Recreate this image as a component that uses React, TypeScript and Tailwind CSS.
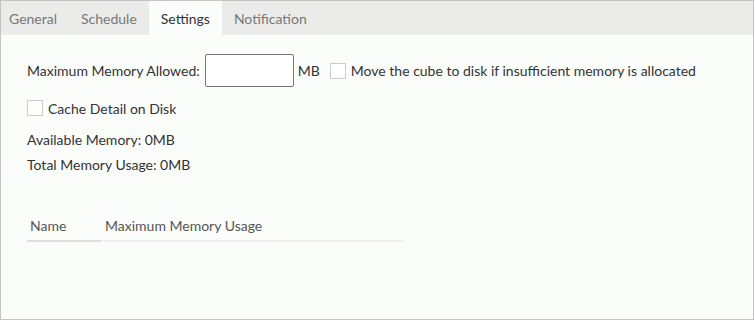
import React from 'react';

const tabs = ['General', 'Schedule', 'Settings', 'Notification'];

const Checkbox: React.FC = () => (
  <span className="inline-block w-[16px] h-[16px] border border-[#cccccc] bg-white shrink-0" />
);

export default function App() {
  return (
    <div
      className="w-[755px] h-[321px] bg-white text-[14px] text-[#333333]"
      style={{ fontFamily: 'Lato, "Noto Sans", sans-serif' }}
    >
      <div className="w-[754px] h-[320px] border border-[#c4c4c4] bg-[#fbfdfb] flex flex-col">
        {/* tab bar */}
        <div className="h-[34px] bg-[#ebecea] flex items-stretch">
          {tabs.map((t, i) => (
            <div
              key={t}
              className={`flex items-center pr-[12px] ${i === 0 ? 'pl-[8px]' : 'pl-[12px]'} ${
                t === 'Settings' ? 'bg-[#fbfdfb] text-[#333333]' : 'text-[#777777]'
              }`}
            >
              {t}
            </div>
          ))}
        </div>

        <div className="pl-[26px] pt-[19px]">
          <div className="flex items-center h-[33px]">
            <span>Maximum Memory Allowed:</span>
            <input className="ml-[5px] w-[89px] h-[33px] border border-[#777777] rounded-[2px] bg-white outline-none" />
            <span className="ml-[4px]">MB</span>
            <span className="ml-[10px] flex"><Checkbox /></span>
            <span className="ml-[5px]">Move the cube to disk if insufficient memory is allocated</span>
          </div>

          <div className="flex items-center mt-[13px] h-[16px]">
            <Checkbox />
            <span className="ml-[5px]">Cache Detail on Disk</span>
          </div>

          <div className="mt-[13px] h-[20px] flex items-center">Available Memory: 0MB</div>
          <div className="mt-[5px] h-[20px] flex items-center">Total Memory Usage: 0MB</div>

          <div className="mt-[36px] flex w-[377px]">
            <div className="w-[75px] pl-[3px] h-[32px] flex items-center border-b-2 border-[#dfdfdf] text-[#555555]">Name</div>
            <div className="flex-1 ml-[1px] pl-[2px] h-[32px] flex items-center border-b-2 border-[#efefef] text-[#555555]">Maximum Memory Usage</div>
          </div>
        </div>
      </div>
    </div>
  );
}
